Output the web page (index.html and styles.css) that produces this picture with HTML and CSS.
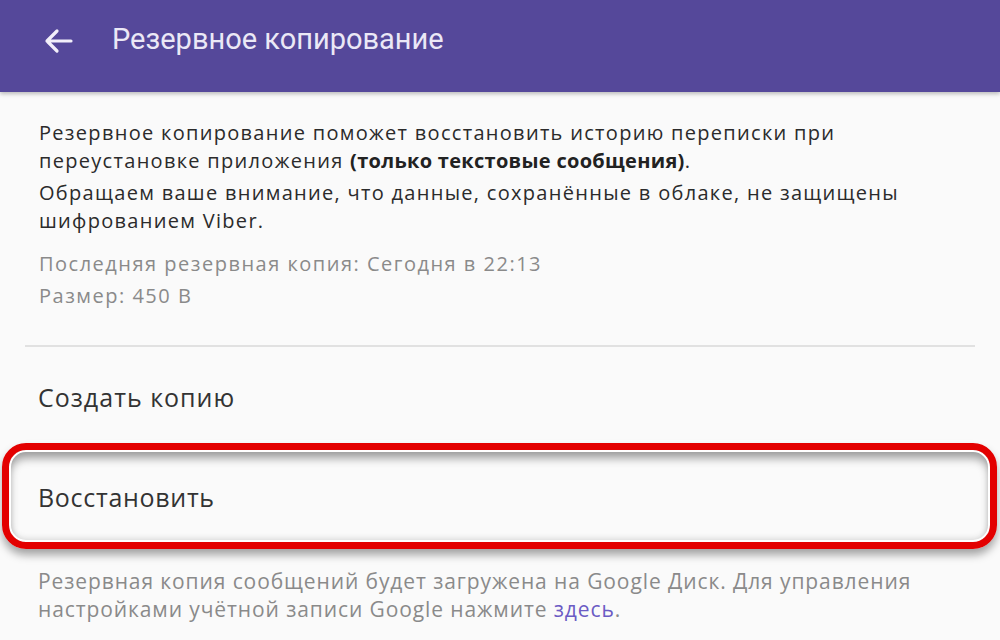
FILE: index.html
```html
<!DOCTYPE html>
<html lang="ru">
<head>
<meta charset="utf-8">
<title>Резервное копирование</title>
<link rel="stylesheet" href="styles.css">
</head>
<body>
<header class="appbar">
  <svg class="back" width="30" height="26" viewBox="0 0 30 26" aria-hidden="true">
    <path d="M28 13H4M14 3L4 13l10 10" fill="none" stroke="#f2effa" stroke-width="3.2" stroke-linecap="round" stroke-linejoin="round"/>
  </svg>
  <h1 class="title">Резервное копирование</h1>
</header>
<main class="content">
  <section class="intro">
    <p class="desc">Резервное копирование поможет восстановить историю переписки при<br>переустановке приложения <b>(только текстовые сообщения)</b>.</p>
    <p class="desc">Обращаем ваше внимание, что данные, сохранённые в облаке, не защищены<br>шифрованием Viber.</p>
    <div class="meta">
      <div>Последняя резервная копия: Сегодня в 22:13</div>
      <div>Размер: 450 B</div>
    </div>
  </section>
  <div class="divider"></div>
  <div class="item">Создать копию</div>
  <div class="item item-marked">Восстановить</div>
  <p class="note">Резервная копия сообщений будет загружена на Google Диск. Для управления<br>настройками учётной записи Google нажмите <a class="link">здесь</a>.</p>
</main>
</body>
</html>
```
FILE: styles.css
```css
html, body {
  margin: 0;
  padding: 0;
  background: #fafafa;
  font-family: "Open Sans", Roboto, sans-serif;
  overflow: hidden;
}
.appbar {
  height: 92px;
  box-sizing: border-box;
  padding: 0 0 10px 43px;
  background: #55489a;
  display: flex;
  align-items: center;
  box-shadow: 0 2px 4px rgba(0,0,0,0.25);
  position: relative;
  z-index: 1;
}
.back {
  margin-right: 39px;
}
.title {
  margin: 0;
  font-family: Roboto, sans-serif;
  font-size: 29px;
  font-weight: 400;
  color: #ebe8f6;
  margin-top: -4px;
}
.content {
  padding: 0 25px;
}
.intro {
  padding: 27px 14px 0;
}
.desc {
  margin: 0 0 4px;
  font-size: 20px;
  line-height: 28px;
  letter-spacing: 1.3px;
  color: #2b2b2b;
  white-space: nowrap;
}
.desc b {
  font-weight: 700;
  color: #222;
  letter-spacing: 0.3px;
}
.meta {
  margin-top: 13px;
  font-size: 20px;
  line-height: 32px;
  letter-spacing: 1.5px;
  color: #8a8a8a;
}
.divider {
  margin-top: 33px;
  height: 2px;
  background: #e1e1e1;
}
.item {
  height: 100px;
  display: flex;
  align-items: center;
  padding-left: 13px;
  font-size: 25px;
  letter-spacing: 1px;
  color: #333;
}
.item-marked {
  position: relative;
  letter-spacing: 0.7px;
}
.item-marked::after {
  content: "";
  position: absolute;
  left: -23px;
  right: -22px;
  top: -4px;
  bottom: -2px;
  border: 7px solid #e30000;
  border-radius: 24px;
  box-shadow: inset 0 0 0 2px #ffffff, inset 0 8px 10px rgba(0,0,0,0.38), inset 0 -3px 6px rgba(0,0,0,0.15), 0 6px 8px rgba(0,0,0,0.35);
}
.note {
  margin: 20px 0 0;
  padding-left: 13px;
  font-size: 21px;
  line-height: 28px;
  letter-spacing: 0.9px;
  color: #8a8a8a;
  white-space: nowrap;
}
.link {
  color: #6b5bc4;
}
```
